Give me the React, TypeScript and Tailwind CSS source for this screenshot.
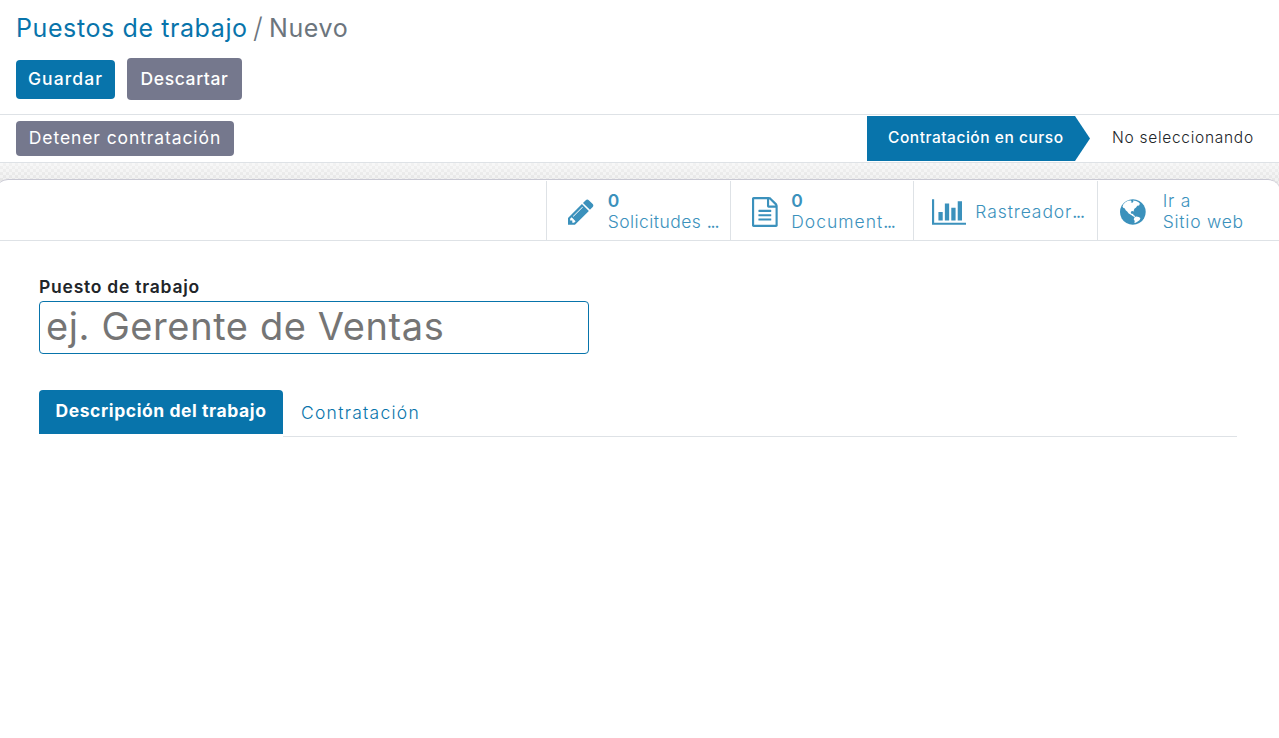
import type { ReactNode } from "react";

const PENCIL =
  "M363 1536l91-91-235-235-91 91v107h128v128h107zM886 608q0-22-22-22-10 0-17 7l-542 542q-7 7-7 17 0 22 22 22 10 0 17-7l542-542q7-7 7-17zM832 416l416 416-832 832h-416v-416zM1515 512q0 53-37 90l-166 166-416-416 166-165q36-38 90-38 53 0 91 38l235 234q37 39 37 91z";
const FILE =
  "M1468 380q28 28 48 76t20 88v1152q0 40-28 68t-68 28h-1344q-40 0-68-28t-28-68v-1600q0-40 28-68t68-28h896q40 0 88 20t76 48zM1024 136v376h376q-10-29-22-41l-313-313q-12-12-41-22zM1408 1664v-1024h-416q-40 0-68-28t-28-68v-416h-768v1536h1280zM384 800q0-14 9-23t23-9h704q14 0 23 9t9 23v64q0 14-9 23t-23 9h-704q-14 0-23-9t-9-23v-64zM1120 1024q14 0 23 9t9 23v64q0 14-9 23t-23 9h-704q-14 0-23-9t-9-23v-64q0-14 9-23t23-9h704zM1120 1280q14 0 23 9t9 23v64q0 14-9 23t-23 9h-704q-14 0-23-9t-9-23v-64q0-14 9-23t23-9h704z";
const CHART =
  "M640 896v512h-256v-512h256zM1024 384v1024h-256v-1024h256zM2048 1536v128h-2048v-1536h128v1408h1920zM1408 640v768h-256v-768h256zM1792 256v1152h-256v-1152h256z";
const DISC =
  "M768 128q209 0 385.5 103t279.5 279.5 103 385.5-103 385.5-279.5 279.5-385.5 103-385.5-103-279.5-279.5-103-385.5 103-385.5 279.5-279.5 385.5-103z";
const LAND =
  "M150 560L200 440L320 310L470 225L640 205L700 260L640 320L740 350L800 290L780 215L960 235L1110 310L1190 400L1140 500L1030 520L960 620L860 700L820 800L850 880L780 830L680 850L640 930L700 1010L790 1000L800 1080L900 1130L890 1190L800 1170L650 1060L520 990L430 870L340 790L290 690L190 640ZM880 1200L980 1160L1120 1190L1220 1260L1180 1370L1060 1460L940 1540L860 1560L880 1440L820 1330Z";

function Icon({ path, wide = false }: { path: string; wide?: boolean }) {
  return (
    <svg
      className={wide ? "mt-px h-[30px] w-[34.3px] shrink-0" : "mt-px h-[30px] w-[25.7px] shrink-0"}
      viewBox={wide ? "0 0 2048 1792" : "0 0 1536 1792"}
      fill="currentColor"
      aria-hidden="true"
    >
      <path d={path} />
    </svg>
  );
}

function GlobeIcon() {
  return (
    <svg className="mt-px h-[30px] w-[25.7px] shrink-0" viewBox="0 0 1536 1792" fill="currentColor" aria-hidden="true">
      <path d={DISC} />
      <path d={LAND} fill="#fff" />
    </svg>
  );
}

function Dots() {
  return <span className="font-normal tracking-[-1.2px]">...</span>;
}

function StatButton({ className, children }: { className: string; children: ReactNode }) {
  return (
    <button
      className={`flex h-[59px] items-center border-l border-[#dee2e6] pt-[2px] text-left text-[17.5px] leading-[21px] font-light whitespace-nowrap text-[#3b91bc] ${className}`}
    >
      {children}
    </button>
  );
}

export default function App() {
  return (
    <div className="flex h-[738px] w-full flex-col overflow-hidden bg-white font-['Inter','Liberation_Sans',sans-serif] text-[#212529]">
      <header className="h-[114px] shrink-0 px-4 pt-3">
        <nav className="flex h-8 items-center text-[25px] leading-8 whitespace-nowrap">
          <a className="w-[237px] tracking-[0.6px] text-[#0874ab]">Puestos de trabajo</a>
          <span className="w-4 text-[28px] font-light text-[#6c757d]">/</span>
          <span className="tracking-[0.6px] text-[#6c757d]">Nuevo</span>
        </nav>
        <div className="mt-[14px] flex items-center gap-3 text-[17.5px] font-medium text-white">
          <button className="h-[39px] w-[99px] rounded bg-[#0874ab] tracking-[1.1px]">Guardar</button>
          <button className="h-[42px] w-[115px] rounded bg-[#75788d] tracking-[0.6px]">Descartar</button>
        </div>
      </header>

      <section className="flex h-[49px] shrink-0 items-start justify-between border-y border-[#dee2e6] pl-4">
        <button className="mt-[6px] h-[35px] w-[218px] rounded bg-[#75788d] text-[17.5px] tracking-[0.9px] text-white">
          Detener contratación
        </button>
        <div className="mt-px flex h-[45px] items-center text-[15.5px] whitespace-nowrap">
          <div className="flex h-[45px] w-[223px] items-center bg-[#0874ab] pb-px pl-[21px] font-medium tracking-[0.53px] text-white [clip-path:polygon(0_0,208px_0,100%_50%,208px_100%,0_100%)]">
            Contratación en curso
          </div>
          <div className="w-[189px] pb-[2px] pl-[22px] font-light tracking-[0.72px]">No seleccionando</div>
        </div>
      </section>

      <main className="flex-1 overflow-hidden bg-[#f3f3f3] bg-[linear-gradient(#ffffff80,#ffffff00_18px),repeating-conic-gradient(#e5e5e5_0_25%,#f1f1f1_0_50%)] bg-[length:100%_100%,6px_6px] pt-4">
        <div className="-mr-px -ml-1 h-full rounded-t-[12px] border-t border-[#c8c8d3] bg-white pt-px">
          <div className="flex h-[60px] justify-end border-b border-[#dee2e6] pr-px">
            <StatButton className="w-[184px] pl-[21px]">
              <Icon path={PENCIL} />
              <span className="mb-[2px] ml-[14px] tracking-[0.45px]">
                <b className="block font-semibold">0</b>
                Solicitudes <Dots />
              </span>
            </StatButton>
            <StatButton className="w-[183px] pl-[21px]">
              <Icon path={FILE} />
              <span className="mb-[2px] ml-[13.5px] tracking-[1px]">
                <b className="block font-semibold">0</b>
                Document
                <Dots />
              </span>
            </StatButton>
            <StatButton className="w-[184px] pl-[18px]">
              <Icon path={CHART} wide />
              <span className="ml-[9px] tracking-[0.9px]">
                Rastreador
                <Dots />
              </span>
            </StatButton>
            <StatButton className="w-[182px] pl-[22px]">
              <GlobeIcon />
              <span className="mb-[2px] ml-[17px] tracking-[0.75px]">
                Ir a<br />
                Sitio web
              </span>
            </StatButton>
          </div>

          <div className="pt-[34px] pr-[43px] pl-[43px]">
            <label className="block h-[26px] text-[17.5px] leading-6 font-semibold tracking-[0.76px]" htmlFor="job">
              Puesto de trabajo
            </label>
            <input
              id="job"
              className="block h-[53px] w-[550px] rounded border border-[#0874ab] bg-white px-[6px] pb-[2px] text-[38px] tracking-[0.6px] placeholder:text-[#757575] placeholder:opacity-100 focus:outline-none"
              placeholder="ej. Gerente de Ventas"
            />
            <div className="mt-9 flex text-[17.5px] whitespace-nowrap">
              <button className="h-11 w-[244px] rounded-t bg-[#0874ab] pb-[2px] font-bold tracking-[0.58px] text-white">
                Descripción del trabajo
              </button>
              <div className="h-[47px] flex-1 border-b border-[#dee2e6] pl-[18px] leading-[46px] font-light tracking-[1.25px] text-[#0874ab]">
                Contratación
              </div>
            </div>
          </div>
        </div>
      </main>
    </div>
  );
}
